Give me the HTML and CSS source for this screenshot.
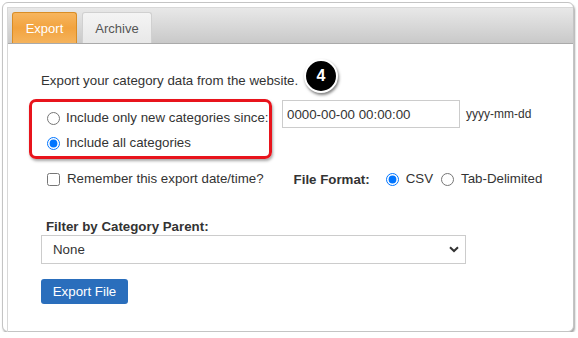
FILE: index.html
```html
<!DOCTYPE html>
<html>
<head>
<meta charset="utf-8">
<link rel="stylesheet" href="styles.css">
</head>
<body>
<div class="frame">
  <div class="panel">
    <div class="tabbar">
      <div class="tab active">Export</div>
      <div class="tab">Archive</div>
    </div>
    <div class="content">
      <p class="intro">Export your category data from the website.</p>
      <div class="since-row">
        <div class="highlight">
          <label class="opt"><input type="radio" name="scope"> Include only new categories since:</label>
          <label class="opt"><input type="radio" name="scope" checked> Include all categories</label>
        </div>
        <div class="date-field">
          <input class="date" type="text" value="0000-00-00 00:00:00">
          <span class="hint">yyyy-mm-dd</span>
        </div>
      </div>
      <div class="opts-row">
        <label class="opt remember"><input type="checkbox"> Remember this export date/time?</label>
        <span class="fmt-label">File Format:</span>
        <label class="opt fmt"><input type="radio" name="fmt" checked> CSV</label>
        <label class="opt fmt"><input type="radio" name="fmt"> Tab-Delimited</label>
      </div>
      <div class="filter">
        <div class="filter-label">Filter by Category Parent:</div>
        <div class="select">
          <span>None</span>
          <svg class="chev" width="10" height="7" viewBox="0 0 10 7"><path d="M1 1.2 L5 5 L9 1.2" fill="none" stroke="#333" stroke-width="2"/></svg>
        </div>
      </div>
      <button class="btn">Export File</button>
    </div>
    <div class="badge">4</div>
  </div>
</div>
</body>
</html>
```
FILE: styles.css
```css
html, body { margin: 0; padding: 0; background: #fff; }
body { font-family: Arial, "Liberation Sans", sans-serif; font-size: 13.3px; color: #333; }
.frame {
  margin: 2px 0 0 2px;
  width: 572px;
  height: 330px;
  border: 1px solid #c4c4c4;
  border-radius: 6px;
  box-shadow: 1px 2px 2px rgba(0,0,0,0.35);
  padding: 4px 0 0 4px;
  box-sizing: border-box;
  background: #fff;
}
.panel { position: relative; height: 100%; border-left: 1px solid #d8d8d8; border-top: 1px solid #d8d8d8; }
.tabbar {
  display: flex;
  gap: 5px;
  height: 31px;
  padding: 4px 0 0 4px;
  background: linear-gradient(#e8e8e8, #c9c9c9);
  border-bottom: 1px solid #aaa;
}
.tab {
  width: 70px;
  box-sizing: border-box;
  display: flex;
  align-items: center;
  justify-content: center;
  background: linear-gradient(#f4f4f4, #e8e8e8);
  border: 1px solid #d0d0d0;
  border-bottom: none;
  border-radius: 3px 3px 0 0;
  color: #555;
  font-size: 13px;
}
.tab.active {
  width: 65px;
  background: linear-gradient(#f7b55e, #f2a33f 50%, #f5b35c);
  border-color: #d98d25;
  color: #fff;
}
.content { padding: 0 0 0 33px; }
.intro { margin: 0; padding-top: 29px; line-height: 16px; }
.since-row { display: flex; align-items: flex-start; margin-top: 10px; margin-left: -12px; }
.highlight {
  width: 243px;
  height: 60px;
  box-sizing: border-box;
  border: 3px solid #e8141c;
  border-radius: 7px;
  box-shadow: 1px 2px 3px rgba(0,0,0,0.35);
  padding: 8px 0 0 15px;
  display: flex;
  flex-direction: column;
  gap: 9px;
}
.opt { display: flex; align-items: center; gap: 6px; line-height: 16px; white-space: nowrap; }
.opt input { margin: 0; width: 13px; height: 13px; }
.date-field { display: flex; align-items: center; gap: 6px; margin-left: 10px; margin-top: 1px; }
.date {
  width: 178px; height: 28px; box-sizing: border-box;
  border: 1px solid #ccc; padding: 0 4px;
  font: 13.3px Arial, "Liberation Sans", sans-serif; color: #333;
}
.hint { font-size: 12px; color: #333; }
.opts-row { display: flex; align-items: center; margin-top: 12px; margin-left: 6px; }
.remember { gap: 7px; }
.fmt-label { font-weight: bold; margin-left: 30px; margin-right: 16px; }
.fmt { gap: 7px; margin-right: 8px; }
.filter { margin-top: 32px; }
.filter-label { font-weight: bold; margin-left: 5px; line-height: 16px; }
.select {
  margin-top: 0;
  width: 425px; height: 29px; box-sizing: border-box;
  border: 1px solid #ccc;
  display: flex; align-items: center; justify-content: space-between;
  padding: 0 6px 0 11px;
}
.btn {
  margin-top: 15px;
  width: 87px; height: 25px;
  background: #2a6ebc;
  border: none; border-radius: 3px;
  color: #fff;
  font: 13.3px Arial, "Liberation Sans", sans-serif;
  padding: 0;
}
.badge {
  position: absolute;
  left: 296px; top: 51px;
  width: 30px; height: 30px;
  border-radius: 50%;
  background: #000;
  border: 2px solid #fff;
  box-shadow: 1px 2px 3px rgba(0,0,0,0.5);
  color: #fff;
  font-weight: bold;
  font-size: 16px;
  display: flex; align-items: center; justify-content: center;
}
```
